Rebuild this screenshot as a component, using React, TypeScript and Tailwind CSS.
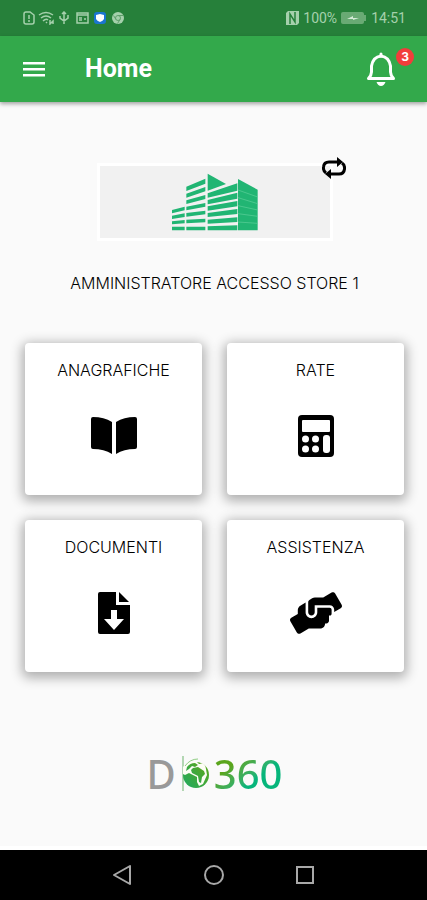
import { FaHandsHelping } from "react-icons/fa";

const BookIcon = () => (
  <svg width="48" height="40" viewBox="0 0 48 40" fill="#000">
    <path d="M1 3Q1 1 3 1Q14 1 22 6V38Q14 33 3 33Q1 33 1 31Z" />
    <path d="M47 3Q47 1 45 1Q34 1 26 6V38Q34 33 45 33Q47 33 47 31Z" />
  </svg>
);

const CalculatorIcon = () => (
  <svg width="38" height="42" viewBox="0 0 38 42">
    <rect x="1" y="0" width="36" height="42" rx="4" fill="#000" />
    <g fill="#fff">
      <rect x="5" y="5" width="28" height="12" rx="1" />
      <circle cx="8.5" cy="24" r="3.5" />
      <circle cx="18.5" cy="24" r="3.5" />
      <circle cx="8.5" cy="34" r="3.5" />
      <circle cx="18.5" cy="34" r="3.5" />
      <rect x="26" y="20" width="7" height="18" rx="3" />
    </g>
  </svg>
);

const DownloadIcon = () => (
  <svg width="32" height="42" viewBox="0 0 32 42" fill="#000">
    <path d="M2 0H18V13H32V40Q32 42 30 42H2Q0 42 0 40V2Q0 0 2 0ZM13 18V27H6L16 38L26 27H19V18Z" fillRule="evenodd" />
    <path d="M21 0L31 10H21Z" />
  </svg>
);

const Building = () => (
  <svg width="92" height="62" viewBox="0 0 276 186" fill="#21b573">
    {/* left wing */}
    <path d="M9 117L47 107V118L9 127ZM9 134L47 127V138L9 144ZM9 151L47 147V157L9 160ZM9 167H47V178H9Z" />
    {/* middle wing */}
    <path d="M52 47L109 23V38L52 60ZM52 68L109 48V61L52 80ZM52 88L109 72V84L52 99ZM52 107L109 96V107L52 118ZM52 126L109 119V130L52 137ZM52 146L109 143V154L52 157ZM52 167H109V178H52Z" />
    {/* front */}
    <path d="M116 8L171 39L116 59Z" />
    <path d="M116 67L205 37V59L116 80ZM116 87L205 65V83L116 100ZM116 106L205 90V106L116 119ZM116 126L205 114V129L116 138ZM116 146L205 139V153L116 158ZM116 166L205 163V178H116Z" />
    {/* tower */}
    <path d="M207 24L266 56V178H207Z" />
    <path d="M207 57L266 78M207 80L266 98M207 104L266 117M207 128L266 136M207 153L266 157" fill="none" stroke="#5fd09c" strokeWidth="2" />
  </svg>
);

const Logo = () => (
  <div className="mt-[75px] flex items-center font-['Noto_Sans',sans-serif] text-[40px] leading-[54px] font-medium">
    <span className="text-[#999]">D</span>
    <svg width="38" height="40" viewBox="0 0 38 40">
      <defs>
        <linearGradient id="globe" x1="1" y1="0" x2="0" y2="1">
          <stop offset="0" stopColor="#5fa616" />
          <stop offset="1" stopColor="#1faa62" />
        </linearGradient>
      </defs>
      <path d="M7 2V37" stroke="#6db36d" />
      <circle cx="20" cy="21" r="13" fill="url(#globe)" />
      {/* sea, then the continents over it */}
      <path d="M7 13Q12 6 20 7L23 10Q29 8 30 15L31 21L27 30L23 32L21 28V23L13 19L9 21L7 20Z" fill="#fdfdf5" />
      <path d="M11 13Q14 9 19 9L22 11L19 13L16 12L13 15L10 17ZM17 14L22 13L28 17L29 20L26 23L25 29L23 28L22 22L16 19L15 16Z" fill="url(#globe)" />
      <path d="M9 12Q14 5 22 5" fill="none" stroke="#8fcd83" />
    </svg>
    <span className="bg-linear-to-br from-[#5aa51c] from-30% to-[#06b57b] to-60% bg-clip-text text-transparent">
      360
    </span>
  </div>
);

const cards = [
  { title: "ANAGRAFICHE", icon: <BookIcon /> },
  { title: "RATE", icon: <CalculatorIcon /> },
  { title: "DOCUMENTI", icon: <DownloadIcon /> },
  { title: "ASSISTENZA", icon: <FaHandsHelping className="h-[42px] w-[52px]" /> },
];

const StatusBar = () => (
  <div className="flex h-9 items-center justify-between bg-[#26803a] pl-[23px] pr-[21px] text-[#a5d0ac]">
    <svg width="102" height="14" viewBox="0 0 102 14" fill="none" stroke="currentColor">
      <path d="M1 3Q1 1 3 1H7L11 4V11Q11 13 9 13H3Q1 13 1 11ZM6 4V8M6 9V11" strokeWidth="1.5" />
      <path d="M16 4Q23 -1 30 4M18 7Q23 3 28 7M20 10Q23 7 25 9M23 12L24 11M27 9V13L30 10V13" strokeWidth="1.5" />
      <path d="M41 13V2M37 5V7L41 10L45 7V4M39 3L41 1L43 3" strokeWidth="1.5" />
      <path d="M54 2H65V12H54ZM54 4H65M56 7H59M56 9H59M61 8H63" strokeWidth="1.5" />
      <rect x="71" y="1" width="12" height="12" rx="3" fill="#1b75d0" stroke="none" />
      <path d="M77 3L81 4V8Q80 10 77 11Q74 10 73 8V4Z" fill="#fff" stroke="none" />
      <circle cx="95" cy="7" r="6" fill="currentColor" stroke="none" />
      <circle cx="95" cy="7" r="2.5" stroke="#5f9f6b" />
      <path d="M95 4.5H100M93 8.5L90.5 4.5M97 8.5L94.5 12.5" stroke="#5f9f6b" />
    </svg>
    <div className="flex items-center gap-1 font-[Roboto,sans-serif] text-sm">
      <svg width="13" height="14" viewBox="0 0 13 14">
        <path d="M2 0H13V12L11 14H0V2Z" fill="currentColor" />
        <path d="M4 13V3L9 11V1" fill="none" stroke="#26803a" strokeWidth="1.5" />
      </svg>
      <span>100%</span>
      <svg width="26" height="12" viewBox="0 0 26 12">
        <rect width="23" height="12" rx="2" fill="#69aa74" />
        <rect x="23" y="3" width="2" height="6" fill="#69aa74" />
        <path d="M6 7L12 4V6L18 6L12 8V7Z" fill="#d4ead7" />
      </svg>
      <span>14:51</span>
    </div>
  </div>
);

export default function App() {
  return (
    <div className="flex min-h-screen flex-col bg-[#fafafa] font-[Inter,sans-serif] text-black">
      <StatusBar />
      <header className="flex h-[66px] items-center bg-[#33a94b] pl-[23px] pr-[13px] text-white shadow-[0_2px_4px_rgba(0,0,0,0.35)]">
        <button type="button" aria-label="Menu">
          <svg width="22" height="16" viewBox="0 0 22 16" fill="currentColor">
            <path d="M0 1H22V3.5H0ZM0 7H22V9.5H0ZM0 13H22V15.5H0Z" />
          </svg>
        </button>
        <h1 className="ml-10 flex-1 font-[Roboto,sans-serif] text-[25px] font-bold">Home</h1>
        <button type="button" aria-label="Notifiche" className="relative pr-[18px]">
          <svg width="30" height="34" viewBox="0 0 30 34" fill="none" stroke="currentColor" strokeWidth="3">
            <path d="M2.5 26.5H27.5Q24.5 23 24.5 20V14Q23 5 15 4Q7 5 5.5 14V20Q5.5 23 2.5 26.5Z" strokeLinejoin="round" />
            <path d="M15 2V4" strokeLinecap="round" />
            <path d="M10.5 30H19.5Q18 34 15 34Q12 34 10.5 30Z" fill="currentColor" stroke="none" />
          </svg>
          <span className="absolute -top-1 right-0 flex size-[18px] items-center justify-center rounded-full bg-[#f23d3b] text-xs font-bold">
            3
          </span>
        </button>
      </header>

      <main className="flex flex-1 flex-col items-center border-b-4 border-white pl-[25px] pr-[23px] pt-[61px]">
        <div className="relative flex h-[78px] w-[236px] items-center justify-center border-[3px] border-white bg-[#f1f1f1]">
          <Building />
          <button type="button" aria-label="Cambia" className="absolute -right-4 -top-[9px]">
            <svg width="24" height="22" viewBox="0 0 24 22" fill="none" stroke="#000" strokeWidth="3">
              <path d="M4 16Q1 14 1.5 10Q2 5 7 5H16M20 6Q23 8 22.5 12Q22 17 17 17H8" />
              <path d="M15 0L21 5L15 10ZM9 12L3 17L9 22Z" fill="#000" stroke="none" />
            </svg>
          </button>
        </div>
        <p className="mt-[30px] text-base leading-6 font-light">AMMINISTRATORE ACCESSO STORE 1</p>

        <div className="mt-12 grid w-full grid-cols-2 gap-[25px]">
          {cards.map((card) => (
            <button
              type="button"
              key={card.title}
              className="flex h-[152px] flex-col items-center rounded bg-white pt-[15px] shadow-[0_3px_12px_3px_rgba(0,0,0,0.3)]"
            >
              <span className="text-base leading-6 font-light">{card.title}</span>
              <span className="mt-6 flex h-[60px] items-center">{card.icon}</span>
            </button>
          ))}
        </div>

        <Logo />
      </main>

      <nav className="flex h-[50px] items-center justify-center gap-[71px] bg-black text-[#a8a8a8]">
        <button type="button" aria-label="Indietro">
          <svg width="20" height="20" viewBox="0 0 20 20" fill="none" stroke="currentColor" strokeWidth="2">
            <path d="M17 1V19L1 10Z" strokeLinejoin="round" />
          </svg>
        </button>
        <button type="button" aria-label="Home">
          <svg width="20" height="20" viewBox="0 0 20 20" fill="none" stroke="currentColor" strokeWidth="2">
            <circle cx="10" cy="10" r="9" />
          </svg>
        </button>
        <button type="button" aria-label="Recenti">
          <svg width="20" height="20" viewBox="0 0 20 20" fill="none" stroke="currentColor" strokeWidth="2">
            <rect x="2" y="2" width="16" height="16" />
          </svg>
        </button>
      </nav>
    </div>
  );
}
